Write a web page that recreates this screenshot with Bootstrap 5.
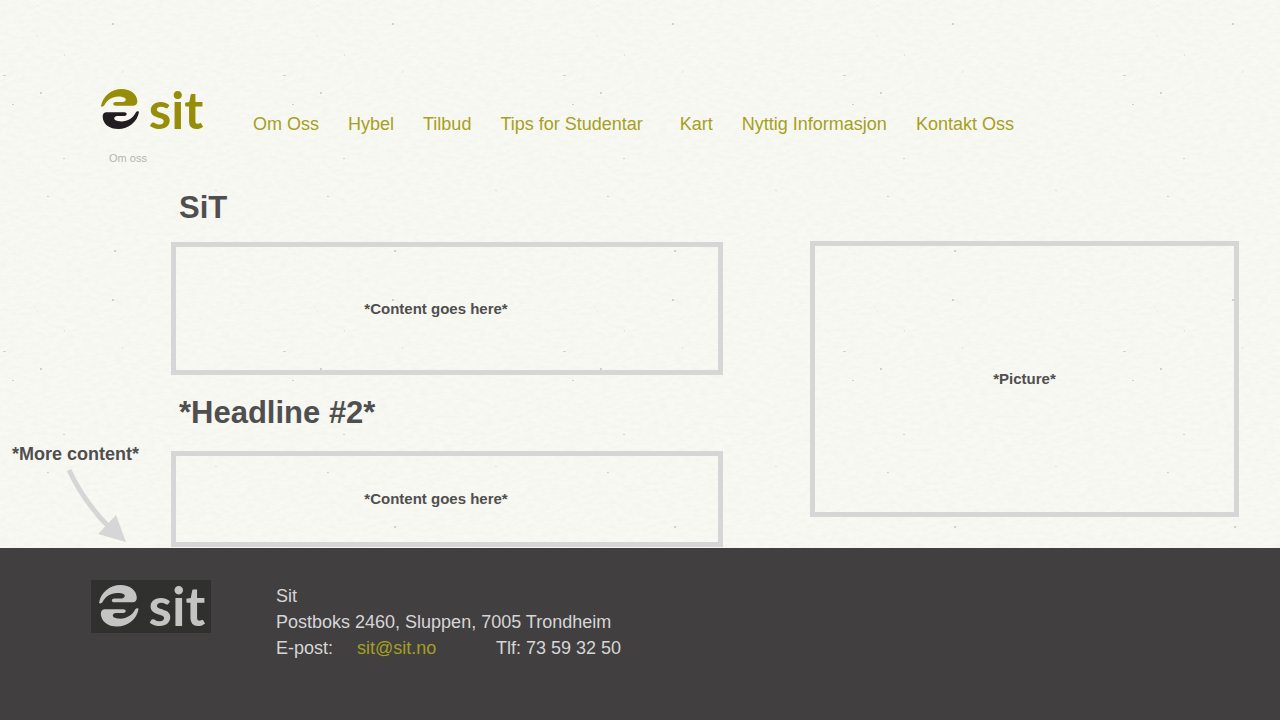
<!DOCTYPE html>
<html lang="nn">
<head>
<meta charset="utf-8">
<meta name="viewport" content="width=device-width, initial-scale=1">
<title>SiT – Om oss</title>
<link href="https://cdn.jsdelivr.net/npm/bootstrap@5.3.0/dist/css/bootstrap.min.css" rel="stylesheet">
<style>
  body {
    font-family: "Liberation Sans", Arial, sans-serif;
    font-size: 18px;
    line-height: 24px;
    color: #4f4f4f;
    background-color: #f9f9f4;
    /* paper grain with a few darker fibres */
    background-image: url("data:image/svg+xml,%3Csvg xmlns='http://www.w3.org/2000/svg' width='280' height='276'%3E%3Cfilter id='g' x='0' y='0' width='100%25' height='100%25' color-interpolation-filters='sRGB'%3E%3CfeTurbulence type='fractalNoise' baseFrequency='.12 .3' numOctaves='3' stitchTiles='stitch'/%3E%3CfeColorMatrix values='0 0 0 0 .55 0 0 0 0 .53 0 0 0 0 .53 .08 0 0 0 -.025'/%3E%3C/filter%3E%3Crect width='280' height='276' filter='url(%23g)'/%3E%3Cg fill='%23d0d0cc'%3E%3Crect x='112' y='23' width='2' height='2'/%3E%3Crect x='40' y='92' width='2' height='2'/%3E%3Crect x='3' y='75' width='3' height='1'/%3E%3Crect x='47' y='196' width='2' height='1'/%3E%3Crect x='12' y='104' width='2' height='1'/%3E%3Crect x='63' y='158' width='2' height='1'/%3E%3Crect x='114' y='250' width='2' height='2'/%3E%3C/g%3E%3Cg fill='%23e2e2de'%3E%3Crect x='37' y='5' width='1' height='1'/%3E%3Crect x='37' y='35' width='1' height='1'/%3E%3Crect x='64' y='54' width='1' height='2'/%3E%3Crect x='122' y='71' width='1' height='2'/%3E%3Crect x='215' y='190' width='2' height='1'/%3E%3C/g%3E%3C/svg%3E");
  }
  .site-header { padding: 88px 24px 0 100px; }
  .site-header .navbar-nav { gap: 4px 29px; margin-left: 51px; }
  .olive-link { color: #a5a021; text-decoration: none; }
  .olive-link:hover { color: #7d7900; }
  .trail { padding: 14px 24px 0 109px; font-size: 11px; line-height: 16px; }
  .trail a { color: #b5b5b2; text-decoration: none; }
  .page-grid {
    display: grid;
    grid-template-columns: 171px minmax(0, 552fr) 87px minmax(0, 429fr);
    padding: 24px 41px 0 0;
  }
  .headline { font-size: 31px; line-height: 36px; font-weight: 700; margin: 0 8px 16px; }
  .frame { border: 5px solid #d6d6d6; font-size: 15px; font-weight: 700; }
  .frame-text { padding-right: 22px; }
  .frame-tall { min-height: 133px; margin-bottom: 20px; }
  .frame-tall + .headline { margin-bottom: 20px; }
  .frame-short { min-height: 96px; }
  .frame-picture { min-height: 276px; margin-top: 51px; grid-column: 4; }
  .more-note { padding: 0 0 3px 12px; font-weight: 700; }
  .more-note svg { margin-left: 52px; }
  .site-footer { background: #413f40; color: #d6d6d6; padding: 32px 24px 32px 91px; margin-top: 1px; }
  .footer-mark { background: #30302f; padding: 4px 7px; }
  .site-footer address { min-width: 345px; margin-left: 65px; line-height: 26px; padding-top: 3px; }
</style>
</head>
<body class="d-flex flex-column min-vh-100">

<svg width="0" height="0" class="position-absolute" aria-hidden="true">
  <symbol id="hand" viewBox="30 38 118 126">
    <path d="M33 92C38 62 65 41 95 41C122 41 141 56 142 78C142 86 138 91 130 91L77 91C68 91 67 81 77 80L98 80C110 79 111 67 97 65C72 60 52 72 43 90C40 95 33 95 33 92Z"/>
  </symbol>
</svg>

<header>
  <nav class="site-header navbar-expand d-flex align-items-end" aria-label="Hovudmeny">
    <a href="#" class="d-block flex-shrink-0" aria-label="sit">
      <svg class="d-block overflow-visible" width="102" height="48" viewBox="30 38 306 144">
        <use href="#hand" x="30" y="38" width="118" height="126" fill="#968d08"/>
        <use href="#hand" x="30" y="38" width="118" height="126" fill="#211d20" transform="rotate(180 90 101)"/>
        <text x="176" y="160" font-family="Lato, sans-serif" font-weight="700" font-size="154" fill="#968d08">sit</text>
      </svg>
    </a>
    <ul class="navbar-nav flex-wrap">
      <li><a class="olive-link" href="#">Om Oss</a></li>
      <li><a class="olive-link" href="#">Hybel</a></li>
      <li><a class="olive-link" href="#">Tilbud</a></li>
      <li class="me-2"><a class="olive-link" href="#">Tips for Studentar</a></li>
      <li><a class="olive-link" href="#">Kart</a></li>
      <li><a class="olive-link" href="#">Nyttig Informasjon</a></li>
      <li><a class="olive-link" href="#">Kontakt Oss</a></li>
    </ul>
  </nav>
  <div class="trail"><a href="#">Om oss</a></div>
</header>

<main class="page-grid">
  <aside class="more-note align-self-end">
    *More content*
    <svg class="d-block" width="64" height="78" viewBox="64 466 64 78" aria-hidden="true">
      <path d="M69 470Q84 502 109 527" fill="none" stroke="#d6d6d6" stroke-width="5"/>
      <path d="M126 542L98 534L116 515Z" fill="#d6d6d6"/>
    </svg>
  </aside>
  <article>
    <h1 class="headline">SiT</h1>
    <div class="frame frame-text frame-tall d-flex align-items-center justify-content-center">*Content goes here*</div>
    <h2 class="headline">*Headline #2*</h2>
    <div class="frame frame-text frame-short d-flex align-items-center justify-content-center">*Content goes here*</div>
  </article>
  <div class="frame frame-picture d-flex align-items-center justify-content-center align-self-start">*Picture*</div>
</main>

<footer class="site-footer flex-grow-1 d-flex align-items-start">
  <div class="footer-mark flex-shrink-0">
    <svg class="d-block overflow-visible" width="106" height="45" viewBox="30 38 306 130" role="img" aria-label="sit">
      <g fill="#c4c4c4">
        <use href="#hand" x="30" y="38" width="118" height="126"/>
        <use href="#hand" x="30" y="38" width="118" height="126" transform="rotate(180 90 101)"/>
        <text x="176" y="160" font-family="Lato, sans-serif" font-weight="700" font-size="154">sit</text>
      </g>
    </svg>
  </div>
  <address class="mb-0">
    <div>Sit</div>
    <div>Postboks 2460, Sluppen, 7005 Trondheim</div>
    <div class="d-flex flex-wrap justify-content-between">
      <span class="d-flex gap-4"><span>E-post:</span><a class="olive-link" href="mailto:sit@sit.no">sit@sit.no</a></span>
      <span>Tlf: 73 59 32 50</span>
    </div>
  </address>
</footer>

<script src="https://cdn.jsdelivr.net/npm/bootstrap@5.3.0/dist/js/bootstrap.bundle.min.js"></script>
</body>
</html>
